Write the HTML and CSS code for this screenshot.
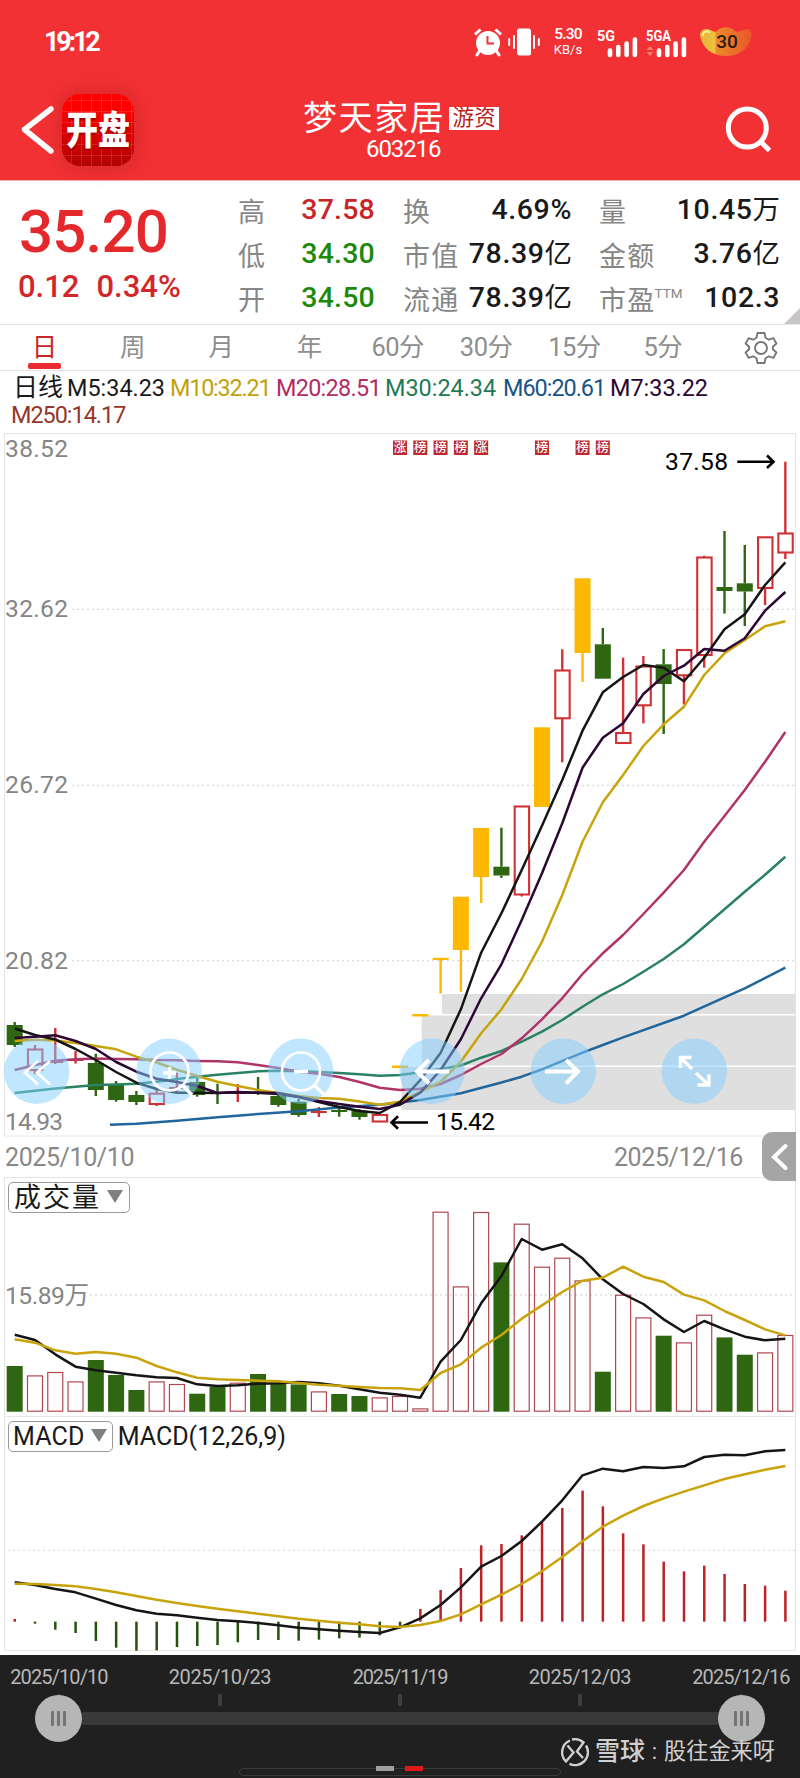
FILE: index.html
```
<!DOCTYPE html>
<html lang="zh-CN">
<head>
  <meta charset="UTF-8" />
  <meta name="viewport" content="width=device-width, initial-scale=1.0">
  <title>梦天家居 603216</title>
  <link rel="stylesheet" href="styles.css">
</head>
<body>
  <header class="header">
    <div class="status-bar">
      <span class="clock">19:12</span>
      <svg class="icon-alarm" width="30" height="30" viewBox="0 0 30 30">
        <circle cx="15" cy="16" r="12" fill="#fff"/>
        <path d="M2 7.500L7.500 2.500M22.500 2.500L28 7.500" stroke="#fff" stroke-width="3"/>
        <path d="M6.500 24L4 28M23.500 24L26 28" stroke="#fff" stroke-width="3" stroke-linecap="round"/>
        <path d="M14.500 9V16.500H21" stroke="#f23134" stroke-width="2" fill="none"/>
      </svg>
      <svg class="icon-vibrate" width="32" height="30" viewBox="0 0 32 30">
        <rect x="9" y="1.500" width="14" height="27" rx="2.500" fill="#fff"/>
        <path d="M1.200 12v6M6 9v12M26 9v12M30.800 12v6" stroke="#fff" stroke-width="2" stroke-linecap="round"/>
      </svg>
      <div class="speed"><b>5.30</b><span>KB/s</span></div>
      <svg class="icon-signal" width="42" height="36" viewBox="0 -4 42 36">
        <text x="0" y="11.500" class="net" textLength="18" lengthAdjust="spacingAndGlyphs">5G</text>
        <path d="M13 21.500V26M21.300 18V26M29.600 14.500V26M37.900 10.500V26" stroke="#fff" stroke-width="4.600" stroke-linecap="round"/>
      </svg>
      <svg class="icon-signal-2" width="44" height="36" viewBox="0 -4 44 36">
        <text x="1" y="11.500" class="net" textLength="25" lengthAdjust="spacingAndGlyphs">5GA</text>
        <path d="M5 18l3.500 4h-7zM5 28l3.500-4h-7z" fill="#f87a6c" transform="translate(0 -1)"/>
        <path d="M14 21.500V26M22.300 18V26M30.600 14.500V26M38.900 10.500V26" stroke="#fff" stroke-width="4.600" stroke-linecap="round"/>
      </svg>
      <svg class="icon-battery" width="54" height="30" viewBox="0 0 54 30">
        <defs>
          <linearGradient id="gold" x1="0" x2="1"><stop offset="0" stop-color="#e6b33a"/><stop offset=".28" stop-color="#ecc33e"/><stop offset=".32" stop-color="#ee8a2c"/><stop offset="1" stop-color="#e8562a"/></linearGradient>
        </defs>
        <path d="M1 8C1 3 6 1 10 2.500C14 4 16 6 18 4C22 -1 32 -1 36 4C38 6 42 4 46 2.500C51 1 54 5 52 11C49 23 39 29 27 29C13 29 3 21 1 8Z" fill="url(#gold)"/>
        <path d="M4 8C4 4 8 4 10 5" stroke="#f9ec93" stroke-width="2" fill="none" stroke-linecap="round"/>
        <text x="28" y="20.500" text-anchor="middle" class="battery-level">30</text>
      </svg>
    </div>
    <div class="nav">
      <div class="nav-left">
        <svg width="36" height="56" viewBox="0 0 36 56"><path d="M31 8L4.500 28.500L31 50" fill="none" stroke="#fff" stroke-width="5.500" stroke-linecap="round" stroke-linejoin="round"/></svg>
        <div class="app-icon"><span>开盘</span></div>
      </div>
      <div class="stock">
        <div class="stock-name">梦天家居<span class="stock-tag">游资</span></div>
        <div class="stock-code">603216</div>
      </div>
      <svg class="icon-search" width="50" height="50" viewBox="0 0 50 50">
        <circle cx="22.300" cy="23" r="19" fill="none" stroke="#fff" stroke-width="5"/>
        <path d="M35 36L44.500 45.500" stroke="#fff" stroke-width="5"/>
      </svg>
    </div>
  </header>

  <section class="quote">
    <div class="price">
      <div class="price-now">35.20</div>
      <div class="price-change"><span>0.12</span><span>0.34%</span></div>
    </div>
    <dl class="stats stats-a">
      <dt>高</dt><dd class="up">37.58</dd>
      <dt>低</dt><dd class="down">34.30</dd>
      <dt>开</dt><dd class="down">34.50</dd>
    </dl>
    <dl class="stats stats-b">
      <dt>换</dt><dd>4.69%</dd>
      <dt>市值</dt><dd>78.39<i>亿</i></dd>
      <dt>流通</dt><dd>78.39<i>亿</i></dd>
    </dl>
    <dl class="stats stats-c">
      <dt>量</dt><dd>10.45<i>万</i></dd>
      <dt>金额</dt><dd>3.76<i>亿</i></dd>
      <dt>市盈<sup>TTM</sup></dt><dd>102.3</dd>
    </dl>
    <span class="corner"></span>
  </section>

  <nav class="tabs">
    <span class="tab active">日</span>
    <span class="tab">周</span>
    <span class="tab">月</span>
    <span class="tab">年</span>
    <span class="tab">60分</span>
    <span class="tab">30分</span>
    <span class="tab">15分</span>
    <span class="tab">5分</span>
    <svg class="icon-gear" width="34" height="34" viewBox="0 0 34 34" fill="none" stroke="#777" stroke-width="1.900" stroke-linejoin="round">
      <path d="M13.500 2h7l1 4.800 3.300 1.900 4.600-1.600 3 5.400-3.500 3.200v2.600l3.500 3.200-3 5.400-4.600-1.600-3.300 1.900-1 4.800h-7l-1-4.800-3.300-1.900-4.600 1.600-3-5.400 3.500-3.200v-2.600l-3.500-3.200 3-5.400 4.600 1.600 3.300-1.900z"/>
      <circle cx="17" cy="17" r="6"/>
    </svg>
  </nav>

  <div class="averages">
    <span class="period">日线</span><span class="m5">M5:34.23</span><span class="m10">M10:32.21</span><span class="m20">M20:28.51</span><span class="m30">M30:24.34</span><span class="m60">M60:20.61</span><span class="m7">M7:33.22</span><br>
    <span class="m250">M250:14.17</span>
  </div>

  <div class="k-chart">
    <svg id="kline" width="800" height="704" viewBox="0 433 800 704"></svg>
  </div>

  <div class="date-row">
    <span>2025/10/10</span>
    <span>2025/12/16</span>
    <button class="drawer">
      <svg width="18" height="28" viewBox="0 0 18 28"><path d="M14.500 3L3 14L14.500 25" fill="none" stroke="#fff" stroke-width="4" stroke-linecap="round"/></svg>
    </button>
  </div>

  <div class="panel volume-panel">
    <div class="panel-head">
      <button class="picker">成交量<i class="caret"></i></button>
    </div>
    <svg id="volume" width="800" height="239" viewBox="0 1177 800 239"></svg>
  </div>

  <div class="panel macd-panel">
    <div class="panel-head">
      <button class="picker">MACD<i class="caret"></i></button>
      <span class="macd-params">MACD(12,26,9)</span>
    </div>
    <svg id="macd" width="800" height="239" viewBox="0 1416 800 239"></svg>
  </div>

  <footer class="range">
    <div class="range-dates">
      <span>2025/10/10</span><span class="wide">2025/10/23</span><span class="tight">2025/11/19</span><span class="wide">2025/12/03</span><span>2025/12/16</span>
    </div>
    <div class="range-ticks"><i></i><i></i><i></i><i></i><i></i></div>
    <div class="slider">
      <span class="thumb"><i></i><i></i><i></i></span>
      <span class="track"></span>
      <span class="thumb"><i></i><i></i><i></i></span>
    </div>
    <div class="watermark">
      <svg width="28" height="30" viewBox="0 0 28 30" fill="none" stroke="#d0d0d0" stroke-width="2.400">
        <path d="M9 3.500A12.800 12.800 0 0 0 5 24.500L12.500 15.500L6.500 8.500"/>
        <path d="M11 2.500A12.800 12.800 0 0 1 22.500 5.500L16 14.500L22 21"/>
        <path d="M25 8.500A12.800 12.800 0 0 1 8.500 26.800"/>
      </svg>
      <b>雪球</b><span class="colon">:</span><span>股往金来呀</span>
    </div>
    <div class="home-bar"></div>
    <div class="page-dots"><i></i><i class="on"></i></div>
  </footer>

  <script src="chart.js"></script>
</body>
</html>
```
FILE: styles.css
```
:root {
  --red: #f23134;
  --up: #c92427;
  --down: #1c8a08;
  --grey: #858585;
  --line: #e6e6e6;
}
* {
  box-sizing: border-box;
}
body {
  margin: 0;
  width: 800px;
  background: #fff;
  font-family: Roboto, "Noto Sans CJK SC", sans-serif;
  color: #1a1a1a;
}
svg {
  display: block;
  flex: none;
}
button {
  font-family: inherit;
  margin: 0;
}
i {
  font-style: normal;
}

/* header */
.header {
  height: 181px;
  background: var(--red);
  border-bottom: 1px solid #f9b0b0;
  color: #fff;
}
.status-bar {
  display: flex;
  align-items: center;
  height: 84px;
  padding: 0 44px 0 44px;
}
.clock {
  flex: none;
  width: 429px;
  font-size: 27px;
  font-weight: 700;
  letter-spacing: -3.200px;
}
.icon-alarm {
  margin-right: 5px;
}
.speed {
  flex: none;
  width: 32px;
  margin: 0 13px 0 12px;
  text-align: center;
  font-size: 13px;
  line-height: 16px;
}
.speed b {
  display: block;
  font-size: 15.500px;
  font-weight: 500;
  letter-spacing: -0.800px;
}
.icon-signal {
  margin: 2px 6px 0 0;
}
.icon-signal-2 {
  margin: 2px 10px 0 0;
}
.net {
  font-size: 15px;
  font-weight: 700;
  fill: #fff;
}
.battery-level {
  font: 500 19px Roboto, sans-serif;
  fill: #2a1a10;
}
.nav {
  display: flex;
  height: 96px;
  padding: 0 22px 0 20px;
}
.nav-left {
  display: flex;
  width: 283px;
  padding-top: 10px;
}
.nav-left svg {
  margin: 7px 6px 0 0;
}
.app-icon {
  width: 72px;
  height: 72px;
  border-radius: 18px;
  background:
    repeating-linear-gradient(90deg, transparent 0 9px, rgba(255, 255, 255, 0.12) 9px 10px),
    repeating-linear-gradient(0deg, transparent 0 10px, rgba(255, 255, 255, 0.12) 10px 11px),
    linear-gradient(#ff0000 20%, #b00303);
  box-shadow: 0 0 16px 4px rgba(170, 30, 30, 0.35);
  font-size: 32px;
  font-weight: 900;
  line-height: 74px;
  text-align: center;
  white-space: nowrap;
  text-shadow: 0 1px 2px #900;
}
.app-icon span {
  display: block;
  transform: scaleY(1.22);
}
.stock {
  width: 422px;
  padding-top: 13.500px;
}
.stock-name {
  display: flex;
  align-items: center;
  height: 36px;
  font-size: 34px;
  letter-spacing: 1.600px;
  white-space: nowrap;
}
.stock-tag {
  height: 23px;
  margin: 5px 0 0 4px;
  padding: 0 3px;
  background: #fff;
  color: #b81f22;
  font-size: 21.500px;
  letter-spacing: 0.300px;
  line-height: 22px;
}
.stock-code {
  margin-top: 2px;
  padding-left: 63px;
  font-size: 24px;
  line-height: 26px;
  letter-spacing: -1.100px;
}
.icon-search {
  margin-top: 21px;
}

/* quote */
.quote {
  position: relative;
  display: flex;
  height: 144px;
  border-bottom: 1px solid var(--line);
}
.price {
  width: 238px;
  padding-left: 19px;
  color: #e4282b;
  font-weight: 500;
}
.price-now {
  margin-top: 21px;
  font-size: 60px;
  line-height: 60px;
  letter-spacing: -0.800px;
}
.price-change {
  display: flex;
  gap: 17px;
  margin: 7px 0 0 -1px;
  font-size: 31px;
  line-height: 36px;
  color: #d3262a;
}
.stats {
  display: grid;
  grid-template-columns: auto 1fr;
  grid-auto-rows: 44.200px;
  align-items: center;
  margin: 0;
  padding-top: 7px;
  white-space: nowrap;
}
.stats-a {
  width: 137px;
}
.stats-b {
  width: 169px;
  margin-left: 28px;
}
.stats-c {
  width: 181px;
  margin-left: 27px;
}
.stats dt {
  font-family: "Noto Sans CJK SC", sans-serif;
  font-size: 27px;
  line-height: 43px;
  letter-spacing: 1.300px;
  color: #868686;
}
.stats dt sup {
  font: 400 13.500px/1 Roboto, sans-serif;
  letter-spacing: 0;
  vertical-align: 12px;
  margin: 0 -14px 0 -1px;
}
.stats dd {
  display: flex;
  justify-content: flex-end;
  margin: 0;
  font-size: 28.500px;
  font-weight: 500;
  line-height: 44px;
  letter-spacing: 0.200px;
}
.stats-b dd,
.stats-c dd {
  letter-spacing: 0.600px;
}
.stats dd i {
  font-weight: 400;
  font-size: 27.500px;
  line-height: 44px;
  letter-spacing: 0;
}
.up {
  color: var(--up);
}
.down {
  color: var(--down);
}
.corner {
  position: absolute;
  right: 0;
  bottom: 0;
  border-left: 16px solid transparent;
  border-bottom: 16px solid #c9c5c5;
}

/* tabs */
.tabs {
  display: flex;
  align-items: center;
  height: 46px;
  border-bottom: 1px solid var(--line);
}
.tab {
  display: flex;
  flex-direction: column;
  align-items: center;
  width: 88.400px;
  height: 45px;
  padding-top: 5px;
  font-size: 25.500px;
  line-height: 34px;
  letter-spacing: -0.500px;
  color: #8e8e8e;
}
.tab.active {
  color: var(--up);
}
.tab.active::after {
  content: "";
  width: 33px;
  height: 6px;
  margin-top: -1px;
  border-radius: 2px;
  background: #ea2c2f;
}
.icon-gear {
  margin-left: 37px;
}

/* averages */
.averages {
  height: 62px;
  padding: 3px 0 0 11px;
  font-size: 23.400px;
  line-height: 27px;
  white-space: nowrap;
}
.averages span {
  display: inline-block;
}
.averages .period {
  width: 56px;
  padding-left: 2px;
  font-size: 25px;
  line-height: 27px;
}
.m5 { width: 103px; }
.m10 { width: 106px; letter-spacing: -1.200px; color: #c3a10d; }
.m20 { width: 109px; letter-spacing: -0.700px; color: #b22c64; }
.m30 { width: 118px; letter-spacing: 0; color: #1f7a58; }
.m60 { width: 107px; letter-spacing: -1px; color: #1a5485; }
.m7 { color: #2b0530; }
.m250 { letter-spacing: -1px; color: #94362a; }

/* charts */
.k-chart {
  height: 704px;
}
.frame {
  fill: none;
  stroke: var(--line);
}
.grid {
  stroke: #dcdcdc;
  stroke-width: 1.300;
  stroke-dasharray: 2 3;
}
.gap {
  fill: #dfdfdf;
}
.axis {
  font-size: 24.600px;
  fill: var(--grey);
}
.note {
  font-size: 24.600px;
  fill: #000;
}
.arrow {
  fill: none;
  stroke: #000;
  stroke-width: 2.600;
}
.mark {
  fill: #bd2b30;
}
.mark-text {
  font: 500 12.500px "Noto Sans CJK SC", sans-serif;
  fill: #fff;
  text-anchor: middle;
}
.curve {
  fill: none;
  stroke-width: 2.500;
  stroke-linejoin: round;
}
.touch {
  fill: #81cfff;
  fill-opacity: 0.5;
}
.glyph {
  fill: none;
  stroke: #fff;
  stroke-width: 3.400;
}
.glyph.thin {
  stroke-width: 2.700;
}
.glyph.thick {
  stroke-width: 4;
}

.date-row {
  position: relative;
  display: flex;
  justify-content: space-between;
  height: 40px;
  padding: 1px 57px 0 5px;
  font-size: 25px;
  line-height: 40px;
  letter-spacing: -0.400px;
  color: #888;
}
.drawer {
  position: absolute;
  top: -5px;
  right: 4px;
  z-index: 1;
  width: 34.500px;
  height: 49px;
  padding: 0 0 0 9px;
  border: 0;
  border-radius: 10px 0 0 10px;
  background: #a5a5a5;
}

.panel {
  position: relative;
  height: 239px;
}
.panel-head {
  position: absolute;
  top: 4.500px;
  left: 8px;
  display: flex;
  align-items: center;
}
.picker {
  display: flex;
  align-items: center;
  height: 31px;
  padding: 2px 6px 0 5px;
  border: 1px solid #999;
  border-radius: 5px;
  background: #fff;
  font-size: 27px;
  line-height: 27px;
  letter-spacing: 2px;
  color: #1a1a1a;
}
.volume-panel .caret {
  margin-top: -4px;
}
.macd-panel .picker {
  padding: 0 5px 0 4px;
  font-size: 25px;
  letter-spacing: 0.200px;
}
.caret {
  margin-left: 6px;
  border: 8.500px solid transparent;
  border-top: 13px solid #808080;
  border-bottom: 0;
}
.macd-panel .caret {
  margin-top: -2px;
}
.macd-params {
  margin-left: 5px;
  font-size: 25px;
}

/* range footer */
.range {
  position: relative;
  height: 123px;
  background: #202020;
  overflow: hidden;
}
.range-dates,
.range-ticks {
  display: grid;
  grid-template-columns: 118px 204px 156px 204px 118px;
  justify-items: center;
}
.range-dates {
  padding-top: 10px;
  font-size: 20px;
  line-height: 24px;
  letter-spacing: -0.900px;
  color: #b8b8b8;
}
.range-dates .wide {
  letter-spacing: -0.400px;
}
.range-dates .tight {
  letter-spacing: -1.200px;
}
.range-ticks {
  padding-top: 4.500px;
}
.range-ticks i {
  width: 4px;
  height: 12px;
  border-radius: 1px;
  background: #3e3e3e;
}
.slider {
  display: flex;
  align-items: center;
  height: 47px;
  margin-top: -11px;
  padding: 0 35px;
}
.thumb {
  position: relative;
  display: flex;
  gap: 3px;
  align-items: center;
  justify-content: center;
  width: 47px;
  height: 47px;
  border-radius: 50%;
  background: #b6b6b6;
}
.thumb i {
  width: 3px;
  height: 15px;
  border-radius: 1px;
  background: #747474;
}
.track {
  flex: 1;
  height: 13px;
  background: #393939;
}
.watermark {
  position: absolute;
  left: 561px;
  top: 81px;
  display: flex;
  align-items: center;
  height: 31px;
  font-size: 22.200px;
  line-height: 31px;
  color: #d0d0d0;
  white-space: nowrap;
}
.watermark b {
  margin-left: 6px;
  font-size: 25px;
  font-weight: 500;
}
.watermark .colon {
  width: 19px;
  text-align: center;
}
.home-bar {
  position: absolute;
  left: 239px;
  top: 113px;
  width: 322px;
  height: 8px;
  border: 1px solid #3a3a3a;
  border-radius: 4px;
}
.page-dots {
  position: absolute;
  left: 376px;
  top: 111px;
  display: flex;
  gap: 11px;
}
.page-dots i {
  width: 18px;
  height: 5px;
  background: #a0a0a0;
}
.page-dots .on {
  background: #e01818;
}
```
FILE: chart.js
```
const GREEN = '#2f6612';
const RED = '#cf3236';
const GOLD = '#ffb800';
const x = i => 14.7 + 20.28 * i;

// [colour, high, body top, body bottom, low] as y positions
const candles = [
  ['g', 1022, 1025, 1045, 1047], ['r', 1045, 1049.5, 1070, 1074], ['r', 1028, 1061, 1063, 1064],
  ['r', 1051, 1059, 1061, 1063.5], ['g', 1053.7, 1063, 1090, 1096], ['g', 1081, 1084.7, 1100, 1101.7],
  ['g', 1091, 1095, 1102, 1105], ['r', 1089, 1093.7, 1104, 1106], ['r', 1072.7, 1087, 1089, 1092],
  ['g', 1076.7, 1082, 1095, 1096.7], ['g', 1083.7, 1092, 1094, 1104], ['r', 1084, 1092, 1094, 1102],
  ['g', 1077, 1092, 1094, 1095], ['g', 1093, 1096, 1105, 1106.7], ['g', 1099, 1101.7, 1115, 1116.7],
  ['r', 1107, 1111, 1113, 1117], ['g', 1107, 1110, 1112, 1116.7], ['g', 1109, 1110.7, 1117, 1119.7],
  ['r', 1114, 1115, 1121.5, 1122], ['y', 1066, 1065.5, 1068, 1067], ['y', 1015, 1014, 1016.5, 1016],
  ['y', 959, 957.8, 960, 993.5], ['y', 896.7, 896.7, 950, 991.7], ['y', 828, 828, 877, 903],
  ['g', 827.7, 866.7, 875.5, 878], ['r', 806, 806.5, 894.5, 896.5], ['y', 727.3, 727.3, 807, 807],
  ['r', 649.3, 670.5, 718.3, 762.3], ['y', 578.3, 578.3, 653, 682], ['g', 628, 644.3, 678.7, 678.7],
  ['r', 657.7, 733, 743, 743], ['r', 656, 666.5, 705.3, 723.3], ['g', 649, 664.3, 684, 734],
  ['r', 649.5, 650, 675.3, 704.5], ['r', 555.7, 557.5, 655, 667.7], ['g', 531, 587, 591, 613.5],
  ['g', 545, 583.3, 591.5, 626], ['r', 537, 537.3, 588, 605], ['r', 461.7, 533.5, 552.5, 559]
];

const averages = {
  '#20659b': [[4.7, 1124.7], [6, 1123.7], [8, 1120.7], [10, 1117.3], [12, 1114], [14, 1111.3], [16, 1107.5], [18, 1104.7], [19, 1102.5], [20, 1100], [22, 1093.3], [24, 1082.5], [25, 1076.7], [26, 1069.3], [28, 1052.7], [29, 1045], [30, 1037.3], [33, 1015.7], [35, 997.3], [36, 988.3], [38, 967.7]],
  '#2a8263': [1093, 1090.7, 1088.5, 1086.7, 1085, 1084.5, 1083.7, 1081.7, 1079, 1076.7, 1074.7, 1073, 1071.3, 1070.7, 1071, 1072, 1073, 1074.3, 1075.7, 1075, 1072.3, 1069, 1065.5, 1057.7, 1051, 1041.7, 1031.7, 1020, 1006.7, 994.3, 984, 971.7, 959, 944.3, 926.7, 909.3, 891.7, 874.7, 856.7],
  '#b03468': [1070, 1065, 1060.7, 1059.3, 1058.5, 1059, 1059.3, 1060, 1060.3, 1061, 1061.3, 1062.3, 1065, 1068, 1071.7, 1073.7, 1077, 1082, 1087.7, 1090, 1088.7, 1084, 1075, 1064, 1054, 1038.3, 1019.3, 998.3, 974, 953.3, 935, 914, 892.7, 870, 841.7, 816, 790, 761.7, 732],
  '#c9a30c': [1041, 1039.7, 1040.5, 1043, 1046, 1049.3, 1056.7, 1062.5, 1069.7, 1076, 1081.7, 1086, 1090, 1093, 1096, 1098, 1098.7, 1101.5, 1104.7, 1101.7, 1092, 1082, 1061.7, 1033.3, 1009.3, 979, 941.7, 895, 841.7, 802.3, 775, 746, 724.3, 706.7, 675, 653.3, 640, 626.3, 621.3],
  '#151515': [1028.5, 1035, 1039.5, 1049, 1060, 1072, 1082.7, 1089, 1092.7, 1092.7, 1093, 1092.3, 1092.7, 1094, 1097, 1102, 1107, 1111, 1113, 1102, 1080, 1053, 1009.3, 952.7, 913.3, 870, 825.7, 780, 730.7, 692.3, 677, 665, 667.7, 681.3, 657.7, 629.3, 614.3, 585, 562.3],
  '#2c0733': [1038, 1036.7, 1035.3, 1041, 1049, 1062, 1071.7, 1078.7, 1082, 1086, 1093, 1092, 1092.7, 1093, 1097, 1101, 1104, 1106.7, 1109, 1104.7, 1092.7, 1070, 1039.3, 998.3, 964.3, 920, 873.3, 823.3, 767.7, 737.7, 723.3, 694, 676, 665.7, 649, 650.7, 638.3, 610.7, 592]
};

const volumes = [45.7, 36.3, 39.7, 30.3, 51.7, 36.7, 21.7, 30.3, 27.7, 18, 25, 29, 37.7, 28.3, 27.3, 20.3, 17.7, 15.7, 14.3, 15.7, 3.3, 200, 125.3, 199.7, 149.3, 188, 145, 154, 131.3, 40, 117, 94.3, 76, 69.3, 97, 74.3, 57, 59.3, 76.7];
const volumeMa = {
  '#151515': [494, 510, 553, 590, 601, 608, 616, 622, 624, 643, 648, 646, 641, 640, 636, 640, 647, 658, 668, 674, 683, 575, 510, 400, 318, 207, 239, 223, 265, 328, 372, 402, 448, 486, 453, 478, 500, 511, 506],
  '#c9a30c': [508, 518, 541, 551, 546, 551, 563, 588, 607, 623, 628, 630, 632, 634, 639, 644, 647, 651, 654, 655, 660, 609, 583, 533, 495, 446, 406, 366, 332, 323, 290, 320, 336, 374, 391, 423, 450, 478, 496]
};

const macdBars = [627, 641, 659, 669, 693, 713, 722, 721, 711, 708, 705, 697, 690, 690, 692, 689, 685, 683, 676, 655, 597, 540, 474, 406, 402, 376, 337, 294, 242, 289, 370, 403, 455, 484, 467, 492, 522, 527, 542];
const macdLines = {
  '#151515': [517, 525, 537, 547, 566, 585, 601, 611, 616, 623, 630, 634, 639, 646, 653, 658, 662, 666, 669, 652, 625, 585, 532, 470, 438, 393, 335, 271, 196, 176, 184, 171, 174, 169, 141, 134, 136, 124, 120],
  '#c9a30c': [521, 522, 525, 529, 537, 547, 558, 569, 579, 588, 596, 604, 611, 619, 626, 632, 638, 643, 649, 651, 645, 633, 613, 583, 554, 522, 484, 441, 394, 350, 317, 288, 265, 245, 226, 207, 193, 179, 168]
};

function curve(color, values, y = v => v) {
  const points = values.map((v, i) => Array.isArray(v) ? `${x(v[0])},${y(v[1])}` : `${x(i)},${y(v)}`);
  return `<polyline class="curve" stroke="${color}" points="${points.join(' ')}"/>`;
}

function curves(set, y) {
  return Object.entries(set).map(([color, values]) => curve(color, values, y)).join('');
}

function gridLine(from, y) {
  return `<line class="grid" x1="${from}" x2="795" y1="${y}" y2="${y}"/>`;
}

function candle([type, high, top, bottom, low], i) {
  const cx = x(i);
  const color = { g: GREEN, r: RED, y: GOLD }[type];
  const wick = (a, b) => b > a ? `<rect x="${cx - 1.2}" y="${a}" width="2.4" height="${b - a}" fill="${color}"/>` : '';
  const hollow = type === 'r' && bottom - top > 4;
  const body = hollow
    ? `<rect x="${cx - 7}" y="${top}" width="14.4" height="${bottom - top}" fill="none" stroke="${color}" stroke-width="2.100"/>`
    : `<rect x="${cx - 8}" y="${top}" width="16" height="${bottom - top}" fill="${color}"/>`;
  return wick(high, top) + body + wick(bottom, low);
}

function drawKline() {
  let s = '<rect class="frame" x="4.5" y="433.5" width="791" height="702.5"/>';
  s += gridLine(72, 609.3) + gridLine(72, 785.5) + gridLine(72, 960.7);
  s += '<rect class="gap" x="442" y="994" width="353.500" height="20"/>';
  s += '<rect class="gap" x="421.700" y="1015.500" width="374" height="50"/>';
  s += '<rect class="gap" x="401.500" y="1067" width="394" height="43"/>';
  [['38.52', 456.5, 63], ['32.62', 617, 63], ['26.72', 793, 63], ['20.82', 969, 63], ['14.93', 1129.5, 58]].forEach(([t, y, w]) => {
    s += `<text class="axis" x="5" y="${y}" textLength="${w}">${t}</text>`;
  });
  s += candles.map(candle).join('') + curves(averages);
  [[19, '涨'], [20, '榜'], [21, '榜'], [22, '榜'], [23, '涨'], [26, '榜'], [28, '榜'], [29, '榜']].forEach(([i, t]) => {
    s += `<rect class="mark" x="${x(i) - 7}" y="440.500" width="14" height="14.500"/><text class="mark-text" x="${x(i)}" y="452.300">${t}</text>`;
  });
  s += '<text class="note" x="665" y="469.500" textLength="63">37.58</text><path class="arrow" d="M737.300 461.700H773M767 455.500L773.500 461.700L767 468"/>';
  s += '<text class="note" x="436" y="1129.500" textLength="59">15.42</text><path class="arrow" d="M428 1122.500H392M398 1116.300L391.500 1122.500L398 1128.700"/>';

  [36.7, 169, 300.7, 432, 563.3, 694.3].forEach(cx => {
    s += `<circle class="touch" cx="${cx}" cy="1071.300" r="32.700"/>`;
  });
  s += '<path class="glyph thin" d="M38 1061L25 1072.500L38 1084.500M50 1061L37 1072.500L50 1084.500"/>';
  s += '<path class="glyph" d="M182 1085L192 1095M163 1073H176M169.500 1067V1079"/><circle class="glyph thin" cx="169.500" cy="1071.500" r="19"/>';
  s += '<path class="glyph" d="M314 1085L324 1094.500M294 1071.500H308"/><circle class="glyph thin" cx="301" cy="1071.500" r="19"/>';
  s += '<path class="glyph thick" d="M449 1071.500H417M429 1060L417 1071.500L429 1083.500"/>';
  s += '<path class="glyph thick" d="M545 1071.500H578M566 1060L578 1071.500L566 1083.500"/>';
  s += '<path class="glyph" d="M681 1058L692 1069M680.500 1068V1057.500H691.500M696 1073L708.500 1085M709 1074.500V1085H697.500"/>';
  document.getElementById('kline').innerHTML = s;
}

function drawVolume() {
  const base = 1411.7;
  let s = '<path class="frame" d="M4.500 1416V1177.500H795.500V1416"/>' + gridLine(90, 1295);
  s += '<text class="axis" x="5" y="1303.500" textLength="84">15.89万</text>';
  volumes.forEach((h, i) => {
    s += candles[i][0] === 'g'
      ? `<rect x="${x(i) - 8}" y="${base - h}" width="16" height="${h}" fill="${GREEN}"/>`
      : `<rect x="${x(i) - 7.5}" y="${base - h + 0.5}" width="15" height="${h - 1}" fill="none" stroke="#b0474f" stroke-width="1.200"/>`;
  });
  s += curves(volumeMa, v => 1170 + v / 3);
  document.getElementById('volume').innerHTML = s;
}

function drawMacd() {
  const y = v => 1410 + v / 3;
  const zero = y(635);
  let s = '<rect class="frame" x="4.5" y="1416.5" width="791" height="234"/>' + gridLine(8, 1550.3);
  macdBars.forEach((v, i) => {
    const top = Math.min(y(v), zero);
    s += `<rect x="${x(i) - 1.2}" y="${top}" width="2.500" height="${Math.abs(y(v) - zero)}" fill="${v < 635 ? '#bd2227' : '#24520e'}"/>`;
  });
  s += curves(macdLines, y);
  document.getElementById('macd').innerHTML = s;
}

drawKline();
drawVolume();
drawMacd();
```
